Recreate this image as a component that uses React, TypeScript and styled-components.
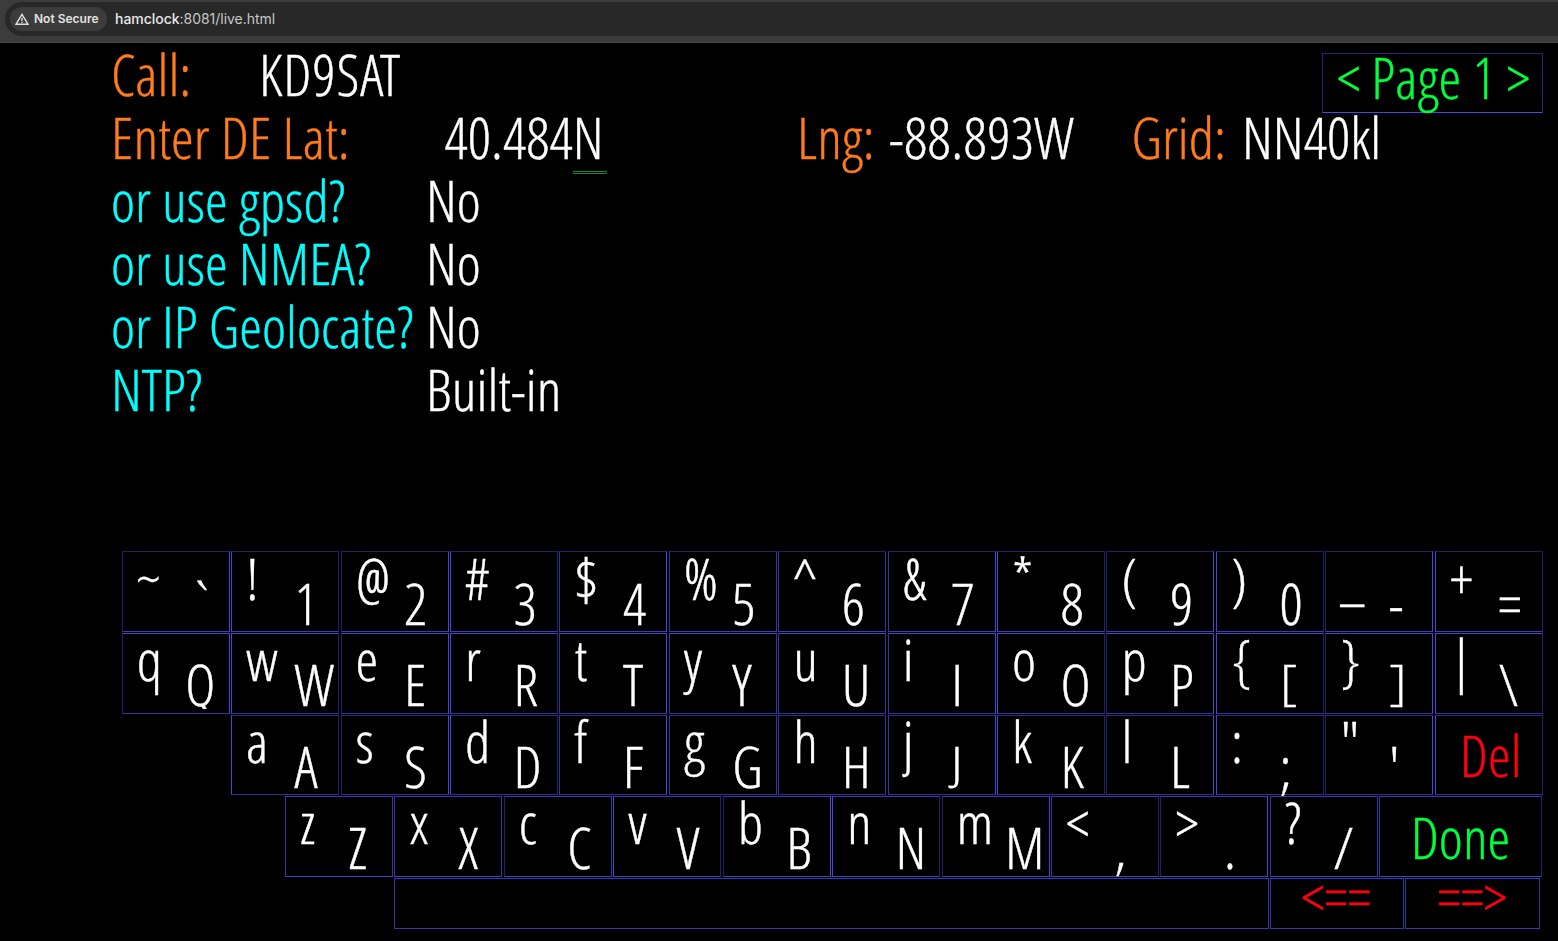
import React from 'react';
import styled, { createGlobalStyle } from 'styled-components';

const GlobalStyle = createGlobalStyle`
  *, *::before, *::after { box-sizing: border-box; }
  html, body { margin: 0; padding: 0; background: #000; overflow: hidden; }
`;

const Page = styled.div`
  width: 1558px;
  height: 941px;
  background: #000;
  color: #fff;
  display: flex;
  flex-direction: column;
  overflow: hidden;
  font-family: 'Open Sans Condensed Light', 'Open Sans', sans-serif;
  font-weight: 300;
  font-stretch: 75%;
  font-size: 58px;
`;

const BrowserBar = styled.div`
  flex: none;
  height: 43px;
  padding: 2px 0 0 5px;
  background: #3c3c3c;
  border-bottom: 1px solid #474747;
`;

const AddressBar = styled.div`
  height: 34px;
  padding-left: 5px;
  display: flex;
  align-items: center;
  gap: 8px;
  background: #282828;
  border-radius: 17px 0 0 17px;
  font-family: Inter, Roboto, sans-serif;
  font-stretch: 100%;
`;

const SecurityChip = styled.div`
  height: 24px;
  width: 97px;
  padding-left: 5px;
  display: flex;
  align-items: center;
  gap: 5px;
  border-radius: 12px;
  background: #3c3c3c;
  color: #e3e3e3;
  font-size: 12px;
  font-weight: 600;
  line-height: 22px;
  white-space: nowrap;
`;

const Url = styled.div`
  color: #c7c7c7;
  font-size: 14px;
  font-weight: 400;
  line-height: 22px;
  letter-spacing: -0.03px;
  b { color: #e8e8e8; font-weight: 500; }
`;

const Screen = styled.div`
  flex: 1;
  display: flex;
  flex-direction: column;
  -webkit-text-stroke: 0.4px currentColor;
`;

const Header = styled.div`
  height: 508px;
  padding: 0 15px 0 111px;
  display: flex;
  justify-content: space-between;
`;

const Form = styled.div`
  width: 0;
  flex: 1;
`;

const FormRow = styled.div`
  height: 63px;
  line-height: 61px;
  display: flex;
  white-space: pre;
`;

const Field = styled.span<{ $w: number; $tone?: string; $ls?: number }>`
  flex: none;
  width: ${p => p.$w}px;
  color: ${p => p.$tone ?? '#fff'};
  letter-spacing: ${p => p.$ls ?? 0}px;
`;

const Cursor = styled.span`
  position: relative;
  &::after {
    content: '';
    position: absolute;
    left: 0;
    bottom: 2px;
    width: 34px;
    height: 3px;
    border: solid #0c8a28;
    border-width: 1px 0;
  }
`;

const PageButton = styled.div`
  flex: none;
  width: 221px;
  height: 60px;
  margin-top: 10px;
  padding-left: 2px;
  line-height: 45px;
  text-align: center;
  white-space: pre;
  color: #00ff3c;
  letter-spacing: 0.1px;
  border: 1px solid #25257a;
  border-bottom-color: #4848e0;
`;

const Keyboard = styled.div`
  display: flex;
  flex-direction: column;
  gap: 1px;
`;

/* Key outlines come in three strengths: dim, medium and bright. */
const SHADES: Record<string, string> = { d: '#202068', m: '#3333a0', b: '#4646d8' };

const KeyRow = styled.div<{ $indent: number; $top: string; $bottom: string; $h: number }>`
  display: flex;
  gap: 1.43px;
  height: ${p => p.$h}px;
  padding-left: ${p => p.$indent}px;
  & > * {
    border-top-color: ${p => p.$top};
    border-bottom-color: ${p => p.$bottom};
  }
`;

const Key = styled.div<{ $w?: number; $tone?: string; $edges?: string; $pad?: string }>`
  flex: none;
  display: flex;
  justify-content: ${p => (p.$tone ? 'center' : 'flex-start')};
  align-items: center;
  width: ${p => p.$w ?? 108}px;
  padding: ${p => p.$pad ?? 0};
  border-style: solid;
  border-width: 1px;
  border-left-color: ${p => SHADES[(p.$edges ?? 'mm')[0]]};
  border-right-color: ${p => SHADES[(p.$edges ?? 'mm')[1]]};
  background: #000;
  color: ${p => p.$tone ?? '#fff'};
`;

const Glyph = styled.span<{ $low?: boolean; $squash?: number; $trim?: boolean }>`
  width: 48.5px;
  flex: none;
  align-self: flex-start;
  line-height: 79px;
  margin-top: ${p => (p.$low ? 10 : -15)}px;
  transform: ${p => (p.$squash ? `scaleY(${p.$squash})` : 'none')};
  transform-origin: 0 21px;
  clip-path: ${p => (p.$trim ? 'inset(0 0 14px 0)' : 'none')};
  &:first-child { margin-left: 14px; }
`;

const ORANGE = '#ff7b1c';
const CYAN = '#00ffff';
const RED = '#ff0010';
const GREEN = '#00ff3c';

const SQUASHED: Record<string, number> = { J: 0.8, '[': 0.83, ']': 0.83 };

const Pair = ({ k, edges, pad }: { k: string; edges: string; pad?: string }) => (
  <Key $edges={edges} $pad={pad}>
    <Glyph>{k[0]}</Glyph>
    <Glyph $low $squash={SQUASHED[k[1]]} $trim={k[1] === 'Q'}>{k[1]}</Glyph>
  </Key>
);

const row1 = ['~`', '!1', '@2', '#3', '$4', '%5', '^6', '&7', '*8', '(9', ')0', '_-', '+='];
const row2 = ['qQ', 'wW', 'eE', 'rR', 'tT', 'yY', 'uU', 'iI', 'oO', 'pP', '{[', '}]', '|\\'];
const row3 = ['aA', 'sS', 'dD', 'fF', 'gG', 'hH', 'jJ', 'kK', 'lL', ':;', '"\''];
const row4 = ['zZ', 'xX', 'cC', 'vV', 'bB', 'nN', 'mM', '<,', '>.', '?/'];
const edges = ['db', 'bd', 'db', 'bd', 'mb', 'mm', 'mm', 'mb', 'bd', 'db', 'bd', 'db', 'bd'];
const edges4 = ['mm', 'mm', 'dm', 'bd', 'db', 'bd', 'db', 'md', 'db', 'mm'];

export default function App() {
  return (
    <Page>
      <GlobalStyle />
      <BrowserBar>
        <AddressBar>
          <SecurityChip>
            <svg width="14" height="12" viewBox="0 0 14 12" fill="none" stroke="#dedede" strokeWidth="1.4">
              <path d="M7 1.3 L13 11.3 H1 Z" />
              <path d="M7 4.8 V8 M7 8.7 V10" />
            </svg>
            Not Secure
          </SecurityChip>
          <Url><b>hamclock</b>:8081/live.html</Url>
        </AddressBar>
      </BrowserBar>
      <Screen>
        <Header>
          <Form>
            <FormRow><Field $w={148} $tone={ORANGE}>Call:</Field><Field $w={200} $ls={0.9}>KD9SAT</Field></FormRow>
            <FormRow>
              <Field $w={333.5} $tone={ORANGE} $ls={0.1}>Enter DE Lat:</Field>
              <Field $w={352.5} $ls={0.05}>40.484<Cursor>N</Cursor></Field>
              <Field $w={92} $tone={ORANGE}>Lng:</Field>
              <Field $w={242.5} $ls={0.4}>-88.893W</Field>
              <Field $w={110.5} $tone={ORANGE}>Grid:</Field>
              <Field $w={140}>NN40kl</Field>
            </FormRow>
            <FormRow><Field $w={315} $tone={CYAN} $ls={0.05}>or use gpsd?</Field><Field $w={200}>No</Field></FormRow>
            <FormRow><Field $w={315} $tone={CYAN} $ls={0.05}>or use NMEA?</Field><Field $w={200}>No</Field></FormRow>
            <FormRow><Field $w={315} $tone={CYAN} $ls={0.05}>or IP Geolocate?</Field><Field $w={200}>No</Field></FormRow>
            <FormRow><Field $w={315} $tone={CYAN}>NTP?</Field><Field $w={200} $ls={0.05}>Built-in</Field></FormRow>
          </Form>
          <PageButton>&lt; Page 1 &gt;</PageButton>
        </Header>
        <Keyboard>
          <KeyRow $indent={121.7} $h={81} $top="#202068" $bottom="#3c3cb8">
            {row1.map((k, i) => <Pair key={k} k={k} edges={edges[i]} pad="1px 0 0" />)}
          </KeyRow>
          <KeyRow $indent={121.7} $h={81} $top="#4343cc" $bottom="#3333a0">
            {row2.map((k, i) => <Pair key={k} k={k} edges={edges[i]} />)}
          </KeyRow>
          <KeyRow $indent={231.1} $h={80} $top="#2a2a84" $bottom="#303098">
            {row3.map((k, i) => <Pair key={k} k={k} edges={edges[i + 1]} />)}
            <Key $tone={RED} $edges="bd" $pad="0 0 2px 4px">Del</Key>
          </KeyRow>
          <KeyRow $indent={285} $h={81} $top="#3838b0" $bottom="#4040c8">
            {row4.map((k, i) => <Pair key={k} k={k} edges={edges4[i]} />)}
            <Key $w={162.5} $tone={GREEN} $edges="md" $pad="0 0 1px 0">Done</Key>
          </KeyRow>
          <KeyRow $indent={394} $h={51} $top="#3838b0" $bottom="#3838b0">
            <Key $w={875} />
            <Key $w={133.4} $tone={RED} $pad="0 2px 17px 0">&lt;==</Key>
            <Key $w={135} $tone={RED} $pad="0 1px 17px 0">==&gt;</Key>
          </KeyRow>
        </Keyboard>
      </Screen>
    </Page>
  );
}
